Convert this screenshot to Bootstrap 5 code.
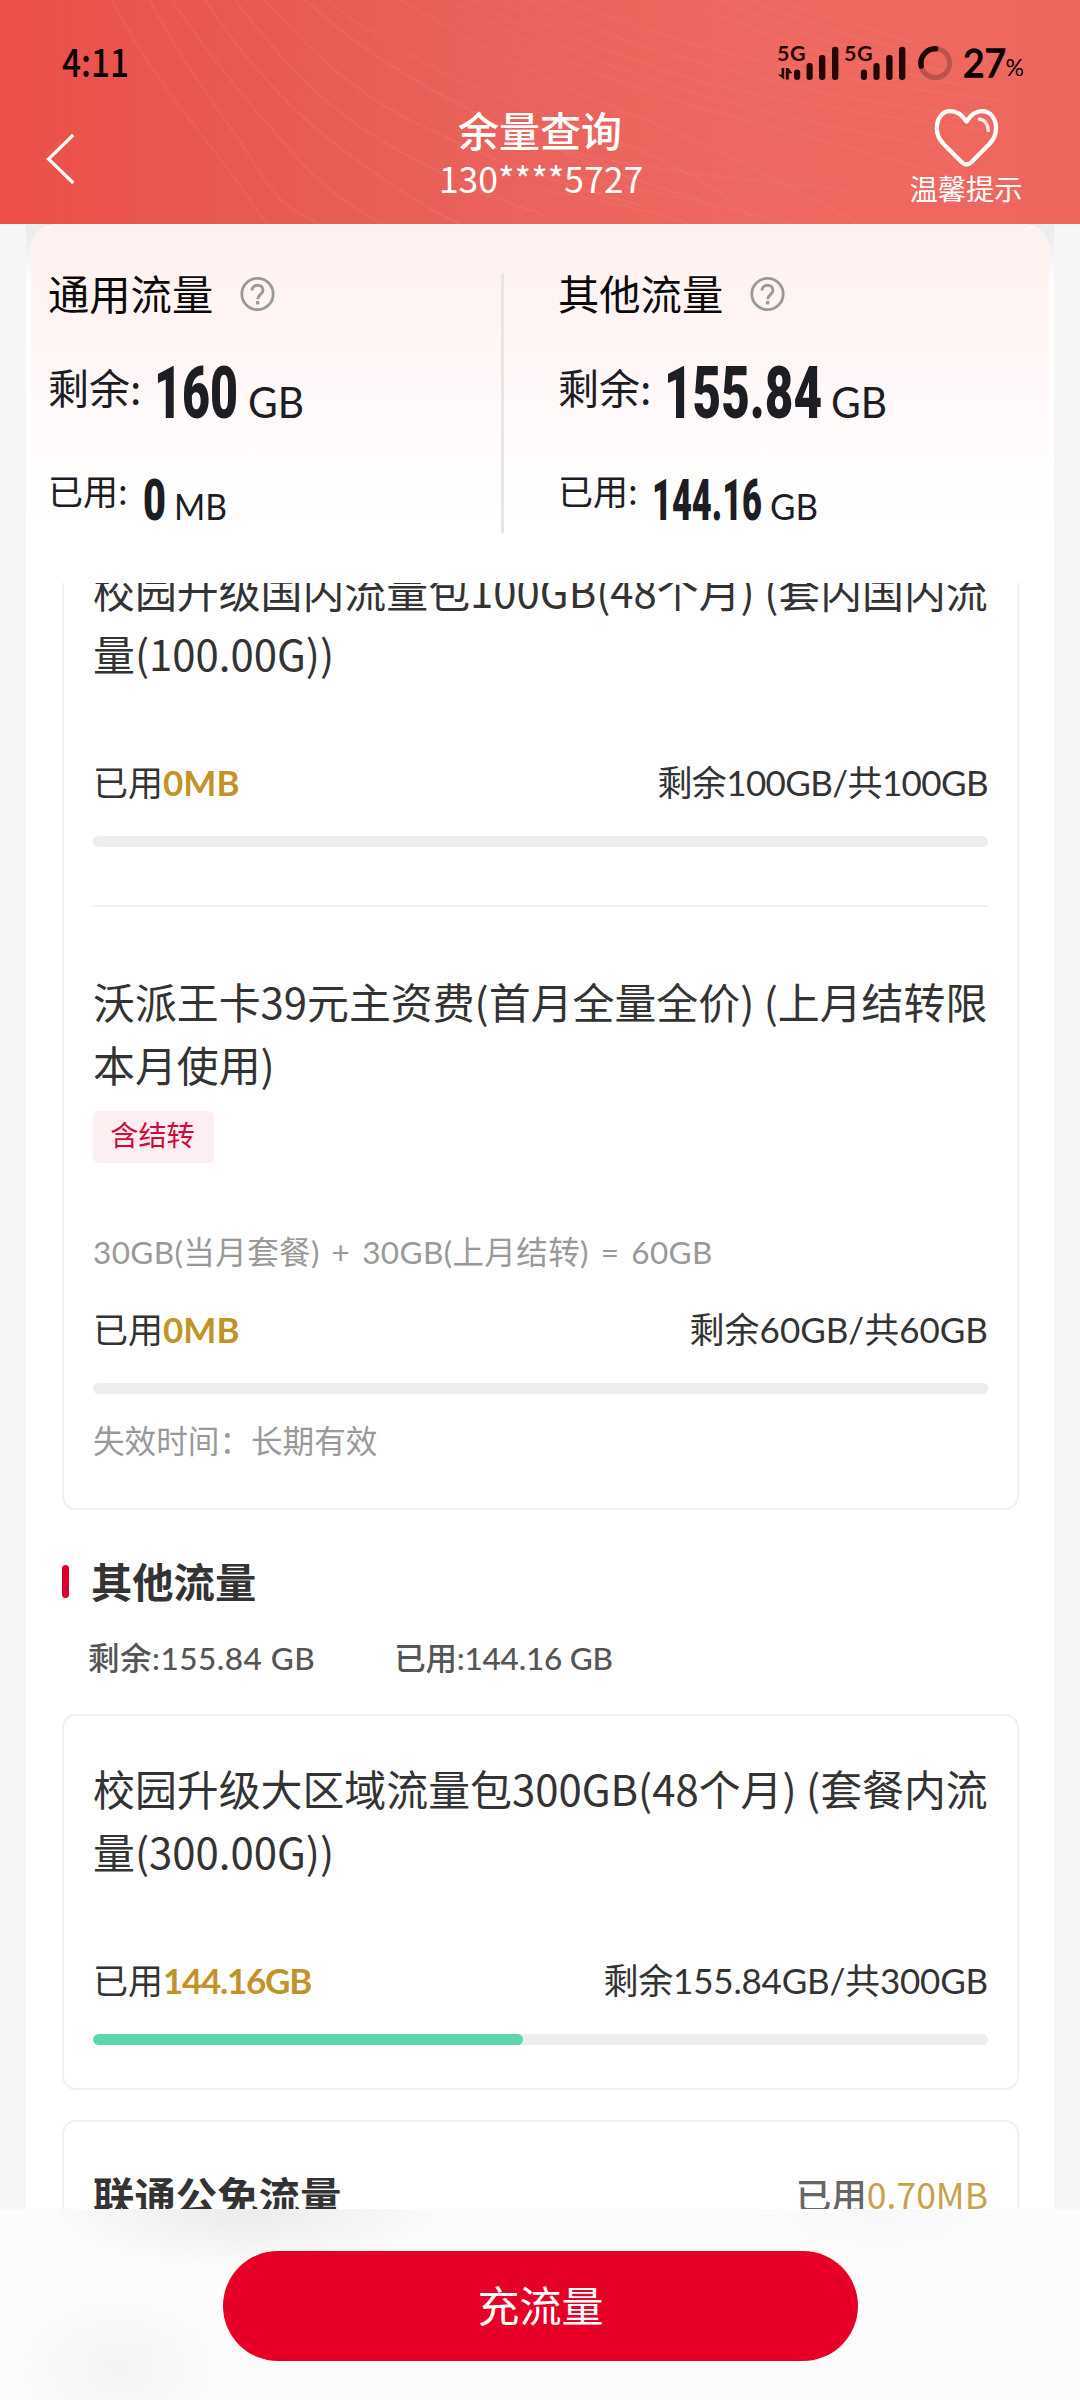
<!DOCTYPE html>
<html lang="zh-CN">
<head>
<meta charset="utf-8">
<meta name="viewport" content="width=device-width, initial-scale=1">
<title>余量查询</title>
<link href="https://cdn.jsdelivr.net/npm/bootstrap@5.3.0/dist/css/bootstrap.min.css" rel="stylesheet">
<style>
  body { width: 1080px; height: 2400px; overflow: hidden; background: #f6f6f6; color: #333;
         font-family: "Noto Sans CJK SC", sans-serif; font-size: 42px; line-height: 63px; }
  .latin { font-family: Lato, "Noto Sans CJK SC", sans-serif; }
  svg { overflow: visible; flex-shrink: 0; }

  /* header */
  .app-head { height: 224px; background: linear-gradient(90deg, #ec504a 0, #e95953 24%, #e9625b 46%, #ee6961 72%, #ee675e 100%); }
  .waves { z-index: 0; }
  .status { height: 96px; padding: 40px 54px 0 62px; }
  .nav-area { height: 128px; padding: 0 54px; }
  .side { width: 120px; }
  .chevron { margin: 36px 0 0 -8px; }
  .page-title { font-size: 41px; line-height: 56px; font-weight: 500; padding-top: 5px; }
  .phone { font-size: 35.5px; line-height: 41px; padding-left: 2px; }
  .tip { font-size: 28.3px; line-height: 32px; }

  /* summary */
  .column { width: 1028px; background: #fff; }
  .summary-wrap { height: 359px; background: linear-gradient(#ececec 0, #efefef 20px, #fff 56px); padding: 0 5px; }
  .summary { height: 359px; border-radius: 26px 26px 0 0; padding: 37px 0 0 17px; border-top: 1px solid #fff;
             background: linear-gradient(#fff1f0 0, #fff5f4 110px, #fffafa 200px, #fff 300px); }
  .col-left { width: 510px; }
  .rule-slot { width: 57px; }
  .sum-title { color: #0b0b0b; font-size: 41.3px; line-height: 60px; height: 60px; gap: 27px; }
  .sum-rest { height: 80px; margin-top: 28px; color: #1d1d24; }
  .sum-rest .lbl { font-size: 41px; line-height: 72px; width: 101px; }
  .sum-used { height: 70px; margin-top: 30px; color: #1d1d24; }
  .sum-used .lbl { font-size: 35px; line-height: 60px; width: 89px; }
  .big-num { font: 900 72px Roboto, sans-serif; }
  .mid-num { font: 900 58px Roboto, sans-serif; }
  .unit-b { font: 400 42.5px Lato, sans-serif; }
  .unit-s { font: 400 37.5px Lato, sans-serif; }
  .v-rule { width: 3px; height: 260px; margin-top: 11px; background: #e7e5e6; border-radius: 2px; }

  /* list */
  .scroller { height: 1626px; padding: 0 35px 0 36px; }
  .pack { border: 2px solid #f0f0f0; border-radius: 14px; padding: 0 29px; --bs-card-bg: #fff; color: #333; }
  .pack-one { margin-top: -40px; padding-top: 13px; padding-bottom: 46px; }
  .pack-two { margin-top: 33px; padding-top: 40px; padding-bottom: 42px; }
  .pack-three { margin-top: 30px; padding-top: 42px; height: 200px; }
  .pack-name { font-size: 41.9px; line-height: 63px; }
  .usage { font-size: 35px; line-height: 50px; margin-top: 73px; }
  .usage b { color: #c29329; font-weight: 700; }
  .snug { letter-spacing: -.6px; }
  .snug-sm { letter-spacing: -.2px; }
  .snug-lg { letter-spacing: -1.3px; }
  .meter { height: 11px; border-radius: 6px; margin-top: 29px; margin-bottom: 1px; background: #ededed; --bs-progress-bg: #ededed; }
  .meter .progress-bar { background: #5dd4aa; border-radius: 6px; }
  .thin-rule { height: 2px; background: #f1f1f1; margin: 57px 0 62px; }
  .carry { margin-top: 16px; height: 52px; width: 121px; border-radius: 6px; background: #fdeef1; color: #d20a3c; font-size: 28.2px; line-height: 46px; padding-right: 2px; }
  .formula { font-size: 31.5px; line-height: 46px; margin-top: 66px; color: #999; letter-spacing: .4px; word-spacing: 3.4px; }
  .after-formula { margin-top: 29px; }
  .expiry { font-size: 31.6px; line-height: 46px; margin-top: 21px; color: #999; }
  .section-head { margin-top: 45px; height: 50px; line-height: 50px; font-size: 41.3px; gap: 22px; }
  .section-head i { width: 7px; height: 33px; margin-top: 3px; border-radius: 4px; background: #dc0028; }
  .totals { margin-top: 30px; padding-left: 26px; font-size: 31.5px; line-height: 46px; color: #555; font-weight: 500; gap: 79px; }
  .totals .rest { letter-spacing: .5px; }
  .totals .used { letter-spacing: -.2px; }
  .free-name { font-size: 41.4px; line-height: 60px; }
  .free-used { font-size: 35.5px; line-height: 60px; color: #666; }
  .free-used .amt { color: #c8a24a; }

  /* bottom bar */
  .foot { height: 191px; background:
      radial-gradient(ellipse 200px 62px at 245px 0, #ebebeb 0, rgba(252,252,252,0) 100%),
      radial-gradient(ellipse 110px 75px at 118px 158px, #f4f4f4 0, rgba(252,252,252,0) 100%),
      radial-gradient(ellipse 150px 50px at 880px 0, #f8f8f8 0, rgba(252,252,252,0) 100%), #fcfcfc;
      padding: 42px 0 0 1px; }
  .recharge { width: 635px; height: 110px; background: #e60027; color: #fff; font-size: 42px; line-height: 60px; padding: 0 0 4px; border: 0; }
  .recharge:hover { background: #e60027; color: #fff; }
</style>
<script src="https://cdn.jsdelivr.net/npm/bootstrap@5.3.0/dist/js/bootstrap.bundle.min.js"></script>
</head>
<body>
<header class="app-head position-relative overflow-hidden">
  <svg class="waves position-absolute top-0 start-0" width="1080" height="224" fill="none" stroke="#fff" stroke-opacity=".05" stroke-width="2.4">
    <path d="M112 0C150 75 195 125 225 165S255 210 268 224M150 0C185 70 225 115 255 165S300 210 318 224M172 0C215 65 255 110 290 150S350 205 382 224M205 0C245 60 285 105 330 140S420 205 460 224M235 0C275 50 310 95 365 130S480 195 545 215M265 0C310 50 350 90 410 120S540 180 640 205M305 0C360 50 420 85 470 110S600 170 700 200"/>
    <path d="M325 0C400 55 470 90 560 120S700 175 760 224M400 0C470 40 540 80 620 110S780 180 860 224M450 0C520 40 600 80 690 105S860 150 950 175M475 0C560 50 640 80 740 105S900 140 960 150M500 0C580 45 680 80 760 95S900 120 985 130M530 0C610 40 700 65 790 85S920 110 990 115M560 0C640 30 740 60 830 75S950 95 1000 100" stroke-opacity=".035"/>
    <path d="M690 0C760 35 830 60 960 85M720 0C790 30 850 50 950 72M750 0C820 30 870 40 940 60M780 0C830 20 880 30 930 48M540 190C600 200 650 210 690 224M540 170C620 185 700 200 790 224M560 150C650 170 740 180 850 190" stroke-opacity=".035"/>
  </svg>
  <div class="status position-relative d-flex justify-content-between align-items-start">
    <svg class="d-block" width="70" height="46" fill="#0a0000"><text x="0" y="37" textLength="67" lengthAdjust="spacingAndGlyphs" font-family="Noto Sans CJK SC" font-size="38.5" font-weight="500">4:11</text></svg>
    <svg class="d-block" width="250" height="46" viewBox="776 40 250 46" fill="#230606">
      <g font-family="Lato, sans-serif" font-weight="700" font-size="21.5">
        <text x="777" y="61.3" textLength="28.5">5G</text><text x="844" y="61.3" textLength="28.5">5G</text>
      </g>
      <path d="M781.6 68h2.6v11.6l-6.4-5.2h3.8zM785.8 68h2.6l4 5.2h-3.6v6.4h-3z"/>
      <g>
        <rect x="794" y="69.5" width="6.2" height="10.5" rx="3"/><rect x="806.5" y="63" width="6.2" height="17" rx="3"/><rect x="819" y="55" width="6.4" height="25" rx="3"/><rect x="832" y="46.7" width="6.4" height="33.3" rx="3"/>
        <rect x="860.8" y="69.5" width="6.2" height="10.5" rx="3"/><rect x="873.4" y="63" width="6.2" height="17" rx="3"/><rect x="886.2" y="55" width="6.4" height="25" rx="3"/><rect x="899" y="46.7" width="6.4" height="33.3" rx="3"/>
      </g>
      <circle cx="935.2" cy="63.2" r="14.4" fill="none" stroke="#a04842" stroke-opacity=".65" stroke-width="5"/>
      <path d="M935.6 48.8A14.4 14.4 0 0 0 921.2 66" fill="none" stroke="#230606" stroke-width="5.4" stroke-linecap="round"/>
      <text x="963" y="77" textLength="43" lengthAdjust="spacingAndGlyphs" font-family="Lato" font-size="39.5" font-weight="400" fill="#0a0000" stroke="#0a0000" stroke-width="1.3">27</text>
      <text x="1005.5" y="76" textLength="18.5" lengthAdjust="spacingAndGlyphs" font-family="Lato" font-size="22.5" fill="#0a0000">%</text>
    </svg>
  </div>
  <nav class="nav-area position-relative d-flex justify-content-between text-white">
    <div class="side">
      <svg class="chevron d-block" width="30" height="54" viewBox="46 132 30 54" fill="none" stroke="#fff" stroke-width="3.2"><path d="M73.300 135L48.500 159L73.300 183"/></svg>
    </div>
    <div class="text-center">
      <div class="page-title">余量查询</div>
      <div class="phone">130****5727</div>
    </div>
    <div class="side d-flex flex-column align-items-center">
      <svg width="68" height="76" viewBox="931 96 68 76" fill="none" stroke="#fff" stroke-linecap="round" stroke-linejoin="round"><path d="M965.500 121.500C960 113 954 111.200 949 111.200C941 111.200 935.800 119 935.800 128C935.800 136 939 140 943 144.500L961 162.500Q965.500 166.500 970 162.500L988 144.500C992 140 995 136 995 128C995 119 989.800 111.200 981 111.200C976 111.200 971 113 965.500 121.500Z" stroke-width="4.300"/><path d="M978.500 119C984 120 987 124 987.300 130.500" stroke-width="3.600" stroke-opacity=".85"/></svg>
      <div class="tip text-nowrap">温馨提示</div>
    </div>
  </nav>
</header>

<div class="column mx-auto">
  <section class="summary-wrap">
    <div class="summary d-flex">
      <div class="col-left d-flex">
        <div class="flex-grow-1">
          <div class="sum-title d-flex align-items-center"><span>通用流量</span>
            <svg width="35" height="35" viewBox="0 0 35 35" fill="none" stroke="#999" stroke-width="2.800"><circle cx="17.500" cy="19" r="15.700"/><path d="M12 15.500c0-7 11-7 11-.3 0 4-5.300 4.300-5.300 9" stroke-width="2.900"/><path d="M17.600 26v3.400" stroke-width="3.400"/></svg></div>
          <div class="sum-rest d-flex"><span class="lbl">剩余:</span>
            <svg width="200" height="80" fill="#1d1d24"><text class="big-num" x="5" y="68" textLength="84" lengthAdjust="spacingAndGlyphs">160</text><text class="unit-b" x="99" y="68" textLength="56" lengthAdjust="spacingAndGlyphs">GB</text></svg></div>
          <div class="sum-used d-flex"><span class="lbl">已用:</span>
            <svg width="200" height="70" fill="#1d1d24"><text class="mid-num" x="6" y="60" textLength="23" lengthAdjust="spacingAndGlyphs">0</text><text class="unit-s" x="37" y="60" textLength="53" lengthAdjust="spacingAndGlyphs">MB</text></svg></div>
        </div>
        <div class="rule-slot"><div class="v-rule"></div></div>
      </div>
      <div>
        <div class="sum-title d-flex align-items-center"><span>其他流量</span>
          <svg width="35" height="35" viewBox="0 0 35 35" fill="none" stroke="#999" stroke-width="2.800"><circle cx="17.500" cy="19" r="15.700"/><path d="M12 15.500c0-7 11-7 11-.3 0 4-5.300 4.300-5.300 9" stroke-width="2.900"/><path d="M17.600 26v3.400" stroke-width="3.400"/></svg></div>
        <div class="sum-rest d-flex"><span class="lbl">剩余:</span>
          <svg width="260" height="80" fill="#1d1d24"><text class="big-num" x="5" y="68" textLength="158" lengthAdjust="spacingAndGlyphs">155.84</text><text class="unit-b" x="172" y="68" textLength="56" lengthAdjust="spacingAndGlyphs">GB</text></svg></div>
        <div class="sum-used d-flex"><span class="lbl">已用:</span>
          <svg width="260" height="70" fill="#1d1d24"><text class="mid-num" x="5" y="60" textLength="110" lengthAdjust="spacingAndGlyphs">144.16</text><text class="unit-s" x="123" y="60" textLength="48" lengthAdjust="spacingAndGlyphs">GB</text></svg></div>
      </div>
    </div>
  </section>

  <main class="scroller overflow-hidden">
    <article class="card pack pack-one">
      <div class="pack-name text-nowrap">校园升级国内流量包100GB(48个月) (套内国内流<br>量(100.00G))</div>
      <div class="usage latin d-flex justify-content-between"><span>已用<b>0MB</b></span><span class="snug">剩余100GB/共100GB</span></div>
      <div class="progress meter"><div class="progress-bar" style="width:0%"></div></div>
      <div class="thin-rule"></div>
      <div class="pack-name text-nowrap">沃派王卡39元主资费(首月全量全价) (上月结转限<br>本月使用)</div>
      <div class="carry text-center">含结转</div>
      <div class="formula latin">30GB(当月套餐) + 30GB(上月结转) = 60GB</div>
      <div class="usage after-formula latin d-flex justify-content-between"><span>已用<b>0MB</b></span><span>剩余60GB/共60GB</span></div>
      <div class="progress meter"><div class="progress-bar" style="width:0%"></div></div>
      <div class="expiry">失效时间：长期有效</div>
    </article>

    <h2 class="section-head d-flex align-items-center fw-bold mb-0"><i></i><span>其他流量</span></h2>
    <div class="totals latin d-flex"><span class="rest">剩余:155.84 GB</span><span class="used">已用:144.16 GB</span></div>

    <article class="card pack pack-two">
      <div class="pack-name text-nowrap">校园升级大区域流量包300GB(48个月) (套餐内流<br>量(300.00G))</div>
      <div class="usage latin d-flex justify-content-between"><span>已用<b class="snug-lg">144.16GB</b></span><span class="snug-sm">剩余155.84GB/共300GB</span></div>
      <div class="progress meter"><div class="progress-bar" style="width:48.05%"></div></div>
    </article>

    <article class="card pack pack-three">
      <div class="d-flex justify-content-between"><span class="free-name fw-bold">联通公免流量</span><span class="free-used"><span class="fw-medium">已用</span><span class="amt">0.70MB</span></span></div>
    </article>
  </main>
</div>

<footer class="foot d-flex justify-content-center align-items-start">
  <button type="button" class="btn recharge rounded-pill">充流量</button>
</footer>
</body>
</html>
